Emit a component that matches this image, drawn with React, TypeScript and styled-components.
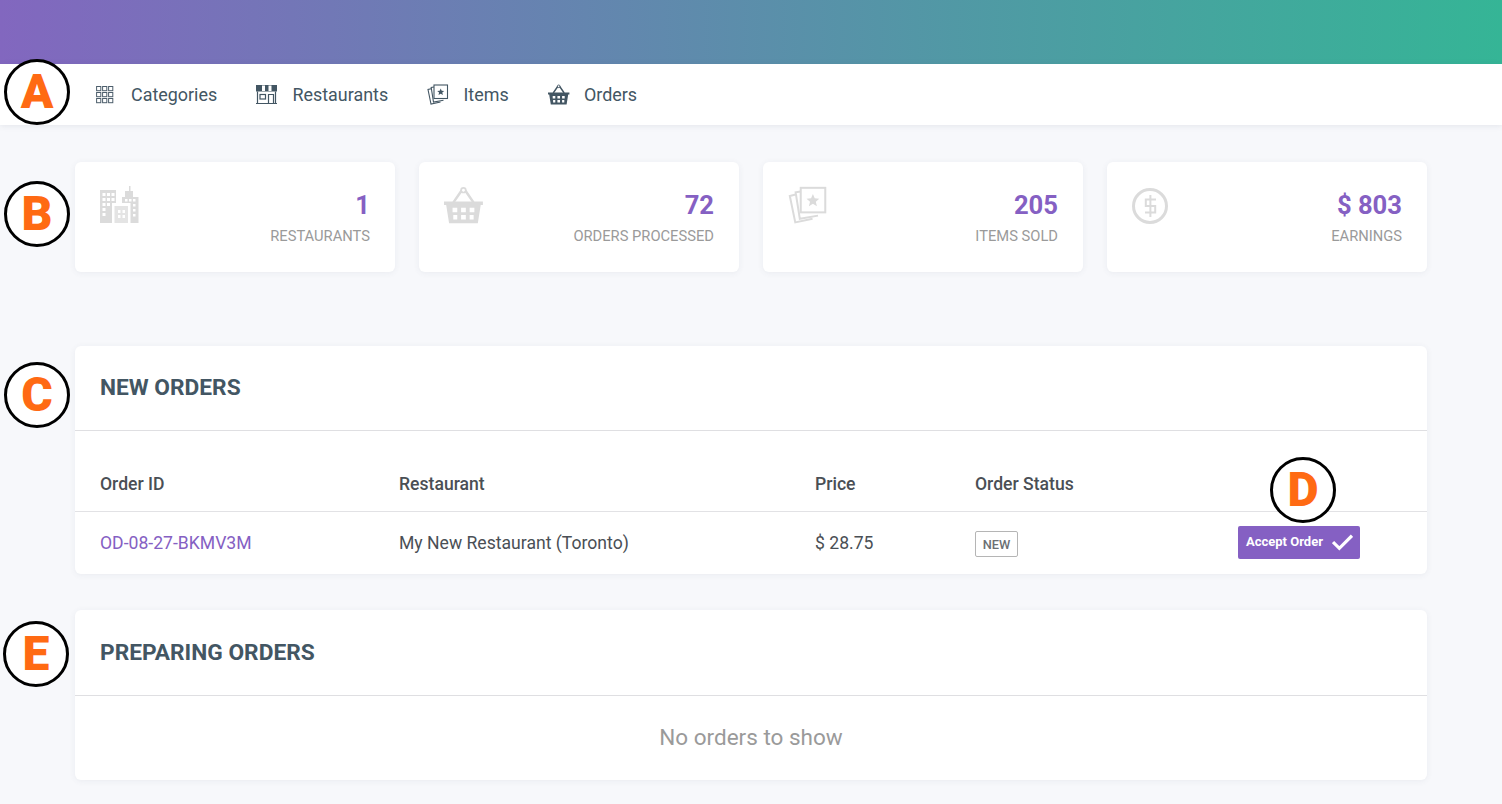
import React from "react";
import styled, { createGlobalStyle } from "styled-components";

const Global = createGlobalStyle`
  html, body { margin: 0; padding: 0; background: #f7f8fb; }
  body { font-family: Roboto, "Liberation Sans", sans-serif; color: #3f4b55; height: 804px; overflow: hidden; }
  * { box-sizing: border-box; }
`;

const Page = styled.div`position: relative; width: 1502px; height: 804px;`;
const Banner = styled.header`height: 64px; background: linear-gradient(90deg, #8267bf 0%, #35b596 100%);`;
const Nav = styled.nav`
  height: 61px; background: #fff; display: flex; align-items: center; padding: 0 0 0 95px; gap: 39.3px;
  box-shadow: 0 1px 6px rgba(60, 70, 100, 0.1);
`;
const NavItem = styled.a`
  display: flex; align-items: center; gap: 14px; font-size: 17.92px; line-height: 22px; color: #435663; padding-top: 1px;
  svg { width: 22px; height: 22px; display: block; flex: none; }
`;
const Main = styled.main`padding: 37px 75px 0; width: 1502px;`;
const Stats = styled.section`display: grid; grid-template-columns: repeat(4, 320px); gap: 24px; margin-bottom: 74px;`;
const StatCard = styled.div`
  position: relative; height: 110px; background: #fff; border-radius: 6px; padding: 27px 25px 0;
  display: flex; justify-content: space-between; box-shadow: 0 1px 6px rgba(60, 70, 100, 0.07);
`;
const StatIcon = styled.div`svg { width: 40px; height: 40px; display: block; } margin-top: -3px;`;
const StatText = styled.div`text-align: right;`;
const StatValue = styled.div`font-size: 25.6px; line-height: 32px; font-weight: 700; color: #8560c3;`;
const StatLabel = styled.div`font-size: 14.72px; line-height: 18px; color: #9a9a9a; margin-top: 6px;`;
const Panel = styled.section<{ $gap?: number }>`
  background: #fff; border-radius: 6px; margin-bottom: ${(p) => p.$gap ?? 36}px; box-shadow: 0 1px 6px rgba(60, 70, 100, 0.07);
`;
const PanelHead = styled.h2<{ $extra?: number }>`
  margin: 0; height: ${(p) => 85 + (p.$extra ?? 0)}px; padding: ${(p) => 28 + (p.$extra ?? 0)}px 25px 0; border-bottom: 1px solid #dfdfe2;
  font-size: 22.72px; line-height: 28px; font-weight: 700; color: #435663;
`;
const Row = styled.div`
  display: grid; grid-template-columns: 299px 416px 160px 263px 1fr; padding-left: 25px; align-items: center;
  font-size: 17.6px; color: #4a4f55;
`;
const HeadRow = styled(Row)`height: 81px; padding-top: 26px; border-bottom: 1px solid #e2e2e5; font-weight: 500;`;
const BodyRow = styled(Row)`height: 62px;`;
const OrderLink = styled.a`color: #8560c3;`;
const Tag = styled.span`
  display: inline-block; height: 26px; width: 43px; border: 1px solid #b5b5b5; border-radius: 2px;
  font-size: 12.8px; line-height: 25px; font-weight: 500; color: #6b6f73; text-align: center; margin-top: 2px;
`;
const AcceptButton = styled.button`
  width: 122px; height: 33px; margin-bottom: 2px; border: 0; border-radius: 2px; background: #8560c3; color: #fff;
  font-family: inherit; font-size: 13px; font-weight: 700; display: flex; align-items: center; padding: 0 0 1px 8px; gap: 9px;
  svg { width: 21px; height: 21px; flex: none; }
`;
const Empty = styled.div`height: 84px; padding-bottom: 2px; display: flex; align-items: center; justify-content: center; font-size: 22.5px; color: #9a9a9a;`;
const Marker = styled.div<{ $x: number; $y: number }>`
  position: absolute; left: ${(p) => p.$x - 33}px; top: ${(p) => p.$y - 33}px; width: 66px; height: 66px;
  border: 3px solid #000; border-radius: 50%; background: #fff; color: #ff6a13;
  display: flex; align-items: center; justify-content: center; font-size: 48px; font-weight: 900; line-height: 1;
  font-family: Roboto, sans-serif;
`;

const GridIcon = () => (
  <svg viewBox="0 0 22 22" fill="none" stroke="#4d5e6c" strokeWidth="1">
    {[2.5, 8.5, 14.5].flatMap((y) => [1.6, 7.6, 13.6].map((x) => <rect key={`${x}-${y}`} x={x} y={y} width="4.2" height="4.2" />))}
  </svg>
);
const StoreIcon = () => (
  <svg viewBox="0 0 22 22" fill="none" stroke="#435663" strokeWidth="1.2">
    <path d="M0 1h21v6.5H0z" fill="#435663" stroke="none" />
    <path d="M6 1.5h3v5.5H6zM12.5 1.5h3v5.5h-3z" fill="#fff" stroke="none" />
    <path d="M1.5 7.5V19.5H19.5V7.5M0 19.5h21" />
    <rect x="4" y="10.5" width="5.5" height="4.5" />
    <path d="M12.5 19.5V10.5h5v9" />
  </svg>
);
const CardsIcon = ({ c = "#435663" }: { c?: string }) => (
  <svg viewBox="0 0 22 22" fill="none" stroke={c} strokeWidth="1.1">
    <rect x="7" y="1" width="13.5" height="13.5" />
    <path d="M7 3 4.2 3.5l2.3 14.5 10-1.7" />
    <path d="M4.2 4.7 1 5.5l3 14.5 9.5-2" />
    <path d="M13.7 4.4l1 2.4 2.5.2-1.9 1.6.6 2.5-2.2-1.3-2.2 1.3.6-2.5L10.2 7l2.5-.2z" fill={c} stroke="none" />
  </svg>
);
const BasketIcon = ({ c = "#435663" }: { c?: string }) => (
  <svg viewBox="0 0 22 22" fill="none">
    <path d="M5.2 9 9.7 2.5M16.2 9 11.7 2.5" stroke={c} strokeWidth="1.4" />
    <circle cx="10.7" cy="2.3" r="1.3" stroke={c} strokeWidth="0.9" />
    <path fillRule="evenodd" fill={c} d="M0 8.5h21.4v2h-1.2L18.6 20.5H2.8L1.2 10.5H0zM4.7 12v2.4h2.6V12zM9.4 12v2.4H12V12zM14.1 12v2.4h2.6V12zM5.1 16v2.4h2.2V16zM9.4 16v2.4H12V16zM14.1 16v2.4h2.2V16z" />
  </svg>
);
const CityIcon = () => (
  <svg viewBox="0 0 40 40" fill="#dbdbdb">
    <path fillRule="evenodd" d="M0 4h16v33H0zM2.5 7v3h3V7zM7 7v3h3V7zM11.5 7v3h3V7zM2.5 12v3h3v-3zM7 12v3h3v-3zM11.5 12v3h3v-3zM2.5 17v3h3v-3zM7 17v3h3v-3zM2.5 22v3h3v-3zM2.5 27v3h3v-3z" />
    <path fillRule="evenodd" d="M25 5h4V0h1.5v5H33v6h5.5v26H22V11h3zM25 13v2.5h2.5V13zM29 13v2.5h2.5V13zM33 13v2.5h2.5V13zM33 18v2.5h2.5V18zM33 23v2.5h2.5V23zM33 28v2.5h2.5V28z" />
    <path fill="#fff" d="M12 17h18.5v20H12z" />
    <path fillRule="evenodd" fill="#e4e4e4" d="M14.5 20h13.5v17H14.5zM18 24v3h2.5v-3zM22.5 24v3H25v-3zM18 29v3h2.5v-3zM22.5 29v3H25v-3z" />
  </svg>
);
const DollarIcon = () => (
  <svg viewBox="0 0 40 40" fill="none" stroke="#dbdbdb">
    <circle cx="18" cy="20" r="16.5" strokeWidth="3" />
    <path d="M24 13.5H13.8v6.5h9.4v6.5H13M18.4 9v22" strokeWidth="2" />
  </svg>
);
const CheckIcon = () => (
  <svg viewBox="0 0 20 20" fill="none" stroke="#fff" strokeWidth="3">
    <path d="M1 10.5 7 16.5 19 4.5" />
  </svg>
);

export default function App() {
  return (
    <Page>
      <Global />
      <Banner />
      <Nav>
        <NavItem><GridIcon />Categories</NavItem>
        <NavItem><StoreIcon />Restaurants</NavItem>
        <NavItem><CardsIcon />Items</NavItem>
        <NavItem><BasketIcon />Orders</NavItem>
      </Nav>
      <Main>
        <Stats>
          <StatCard><StatIcon><CityIcon /></StatIcon><StatText><StatValue>1</StatValue><StatLabel>RESTAURANTS</StatLabel></StatText></StatCard>
          <StatCard><StatIcon><BasketIcon c="#dbdbdb" /></StatIcon><StatText><StatValue>72</StatValue><StatLabel>ORDERS PROCESSED</StatLabel></StatText></StatCard>
          <StatCard><StatIcon><CardsIcon c="#dbdbdb" /></StatIcon><StatText><StatValue>205</StatValue><StatLabel>ITEMS SOLD</StatLabel></StatText></StatCard>
          <StatCard><StatIcon><DollarIcon /></StatIcon><StatText><StatValue>$ 803</StatValue><StatLabel>EARNINGS</StatLabel></StatText></StatCard>
        </Stats>
        <Panel>
          <PanelHead>NEW ORDERS</PanelHead>
          <HeadRow><span>Order ID</span><span>Restaurant</span><span>Price</span><span>Order Status</span><span /></HeadRow>
          <BodyRow>
            <OrderLink>OD-08-27-BKMV3M</OrderLink>
            <span>My New Restaurant (Toronto)</span>
            <span>$ 28.75</span>
            <span><Tag>NEW</Tag></span>
            <AcceptButton>Accept Order<CheckIcon /></AcceptButton>
          </BodyRow>
        </Panel>
        <Panel $gap={0}>
          <PanelHead $extra={1}>PREPARING ORDERS</PanelHead>
          <Empty>No orders to show</Empty>
        </Panel>
      </Main>
      <Marker $x={37} $y={92}>A</Marker>
      <Marker $x={37} $y={214}>B</Marker>
      <Marker $x={37} $y={395}>C</Marker>
      <Marker $x={1303} $y={490}>D</Marker>
      <Marker $x={36} $y={654}>E</Marker>
    </Page>
  );
}
